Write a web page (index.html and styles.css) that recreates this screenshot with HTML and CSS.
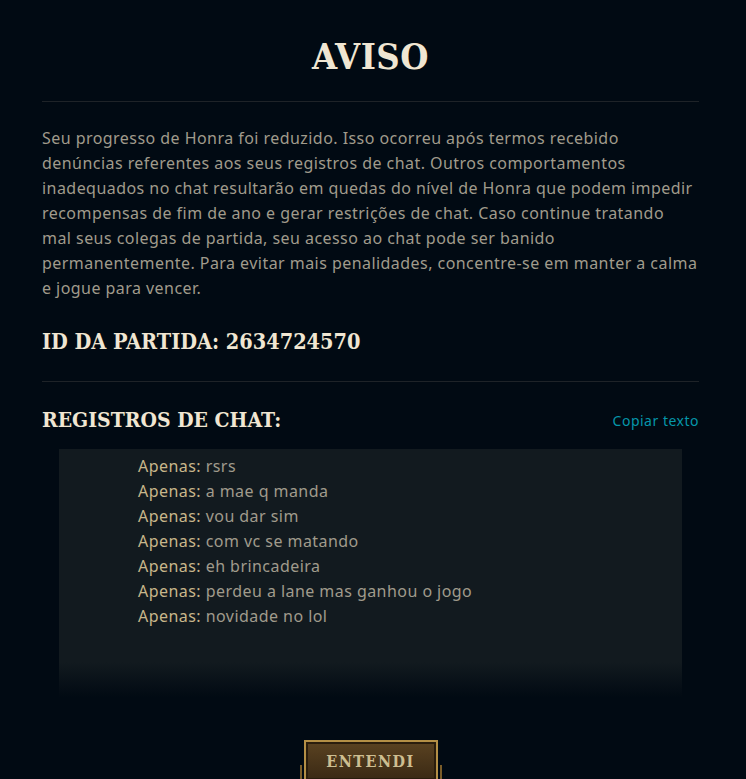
FILE: index.html
```html
<!DOCTYPE html>
<html lang="pt">
<head>
<meta charset="utf-8">
<title>Aviso</title>
<link rel="stylesheet" href="styles.css">
</head>
<body>
<div class="modal">
  <h1 class="title">AVISO</h1>
  <hr class="sep">
  <p class="text">Seu progresso de Honra foi reduzido. Isso ocorreu após termos recebido<br>denúncias referentes aos seus registros de chat. Outros comportamentos<br>inadequados no chat resultarão em quedas do nível de Honra que podem impedir<br>recompensas de fim de ano e gerar restrições de chat. Caso continue tratando<br>mal seus colegas de partida, seu acesso ao chat pode ser banido<br>permanentemente. Para evitar mais penalidades, concentre-se em manter a calma<br>e jogue para vencer.</p>
  <h2 class="match">ID DA PARTIDA: 2634724570</h2>
  <hr class="sep sep2">
  <div class="chat-head">
    <h2 class="chat-title">REGISTROS DE CHAT:</h2>
    <a class="copy">Copiar texto</a>
  </div>
  <div class="chat">
    <div class="line"><span class="name">Apenas:</span> rsrs</div>
    <div class="line"><span class="name">Apenas:</span> a mae q manda</div>
    <div class="line"><span class="name">Apenas:</span> vou dar sim</div>
    <div class="line"><span class="name">Apenas:</span> com vc se matando</div>
    <div class="line"><span class="name">Apenas:</span> eh brincadeira</div>
    <div class="line"><span class="name">Apenas:</span> perdeu a lane mas ganhou o jogo</div>
    <div class="line"><span class="name">Apenas:</span> novidade no lol</div>
  </div>
  <div class="footer">
    <div class="btn-wrap">
      <button class="btn">ENTENDI</button>
    </div>
  </div>
</div>
</body>
</html>
```
FILE: styles.css
```css
html, body {
  margin: 0;
  padding: 0;
  background: #010a13;
  height: 100%;
  overflow: hidden;
}
.modal {
  padding: 0 47px 0 42px;
  font-family: "Noto Sans", "Open Sans", sans-serif;
  letter-spacing: 0.45px;
}
.title,
.match,
.chat-title,
.btn {
  font-family: "DejaVu Serif Condensed", "DejaVu Serif", "Liberation Serif", serif;
  font-weight: bold;
  color: #f0e6d2;
}
.title {
  margin: 0;
  padding-top: 36px;
  height: 64px;
  box-sizing: border-box;
  text-align: center;
  font-size: 36px;
  line-height: 40px;
  letter-spacing: 0.5px;
}
.sep {
  margin: 0;
  border: none;
  height: 1px;
  background: #1e2328;
}
.title + .sep {
  margin-top: 37px;
}
.text {
  margin: 24px 0 0;
  font-size: 16px;
  line-height: 25px;
  color: #a09b8c;
  white-space: nowrap;
}
.match {
  margin: 28px 0 0;
  font-size: 21.5px;
  line-height: 26px;
  letter-spacing: 0;
}
.sep2 {
  margin-top: 26px;
}
.chat-head {
  display: flex;
  justify-content: space-between;
  align-items: center;
  margin-top: 25px;
}
.chat-title {
  margin: 0;
  font-size: 21px;
  line-height: 26px;
  letter-spacing: 0;
}
.copy {
  font-size: 14px;
  color: #0596aa;
  letter-spacing: 0.5px;
}
.chat {
  margin: 16px 17px 0 17px;
  height: 248px;
  box-sizing: border-box;
  padding: 5px 0 0 79px;
  background: linear-gradient(to bottom, #121a1f 0%, #121a1f 86%, #010a13 100%);
  font-size: 16px;
  line-height: 25px;
  color: #a09b8c;
}
.name {
  color: #c8b68a;
}
.footer {
  display: flex;
  justify-content: center;
  margin-top: 43px;
}
.btn-wrap {
  position: relative;
  padding: 0 4px;
}
.btn-wrap::before,
.btn-wrap::after {
  content: "";
  position: absolute;
  top: 25px;
  width: 2px;
  height: 30px;
  background: #7a5c29;
}
.btn-wrap::before { left: 0; }
.btn-wrap::after { right: 0; }
.btn {
  display: block;
  width: 134px;
  height: 42px;
  border: 2px solid #b48f46;
  box-shadow: inset 0 0 0 2px #2a1d0d;
  background: linear-gradient(to bottom, #5a4221, #3a2914);
  color: #cdbe91;
  font-size: 16px;
  letter-spacing: 1.5px;
  padding: 0;
}
```
